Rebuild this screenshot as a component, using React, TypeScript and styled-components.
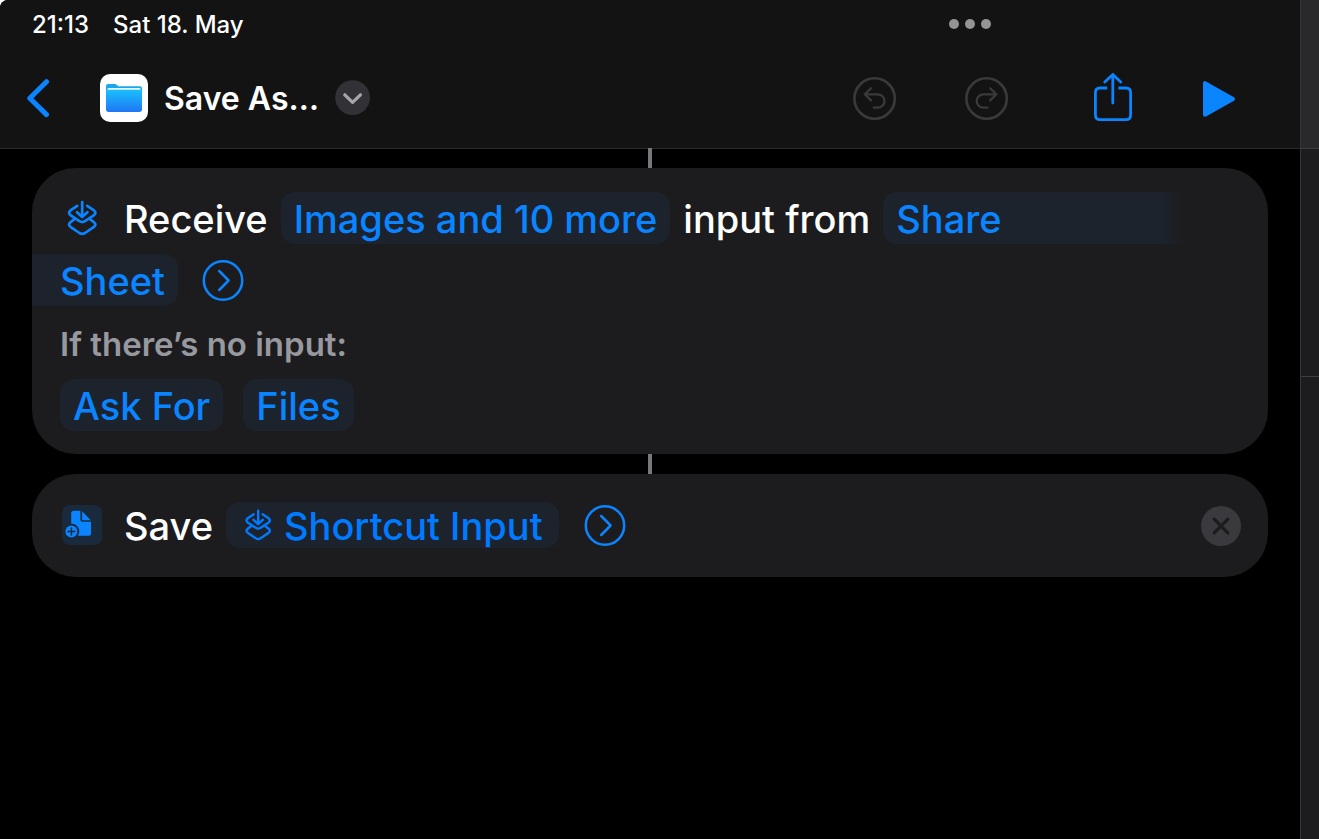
import React from "react";
import styled, { createGlobalStyle } from "styled-components";

const blue = "#0a84ff";

const GlobalStyle = createGlobalStyle`
  * { box-sizing: border-box; }
  body {
    margin: 0;
    background: #fff;
    font-family: Inter, "Liberation Sans", sans-serif;
    color: #fff;
  }
`;

const Screen = styled.div`
  display: flex;
  min-height: 100vh;
  background: #000;
  border-top-left-radius: 8px;
  overflow: hidden;
`;

const Editor = styled.main`
  flex: 1;
  min-width: 0;
`;

const Header = styled.header`
  background: #131313;
  border-bottom: 1px solid #2a2a2b;
`;

const StatusBar = styled.div`
  display: grid;
  grid-template-columns: 1fr auto;
  align-items: center;
  height: 48px;
  padding: 0 309px 0 32px;
  font-size: 24px;
  font-weight: 500;
`;

const Clock = styled.div`
  display: flex;
  gap: 24px;
`;

const DotsButton = styled.button`
  display: flex;
  gap: 6px;
  padding: 0;
  border: 0;
  background: none;
`;

const Dot = styled.span`
  width: 10px;
  height: 10px;
  border-radius: 50%;
  background: #959595;
`;

const Toolbar = styled.div`
  display: flex;
  align-items: center;
  justify-content: space-between;
  height: 100px;
  padding: 0 64px 0 26px;
`;

const TitleGroup = styled.div`
  display: flex;
  align-items: center;
`;

const IconButton = styled.button<{ $color?: string }>`
  display: flex;
  flex: none;
  padding: 0;
  border: 0;
  background: none;
  color: ${(p) => p.$color ?? blue};
`;

const AppTile = styled.span`
  display: flex;
  margin-left: 50px;
`;

const Title = styled.h1`
  margin: 0 16px;
  padding-top: 2px;
  font-size: 32px;
  line-height: 44px;
  font-weight: 600;
`;

const Actions = styled.div`
  display: flex;
  gap: 68px;
  align-items: center;
`;

const History = styled.div`
  display: flex;
  gap: 68px;
  margin-right: 16px;
`;

const Flow = styled.div`
  display: flex;
  flex-direction: column;
  margin-top: -1px;
  padding: 0 32px;
`;

const Connector = styled.div`
  align-self: center;
  width: 4px;
  height: 20px;
  background: #77777c;
`;

const Card = styled.section<{ $compact?: boolean }>`
  display: flex;
  flex-direction: column;
  gap: 10px;
  padding: ${(p) => (p.$compact ? "25px 27px 26px 28px" : "24px 28px 23px")};
  background: #1c1c1e;
  border-radius: 44px;
`;

const Row = styled.div<{ $gap?: number }>`
  display: flex;
  align-items: center;
  gap: ${(p) => p.$gap ?? 13}px;
  height: 52px;
  font-size: 38px;
  font-weight: 500;
  white-space: nowrap;
`;

const Glyph = styled.span`
  display: flex;
  justify-content: center;
  width: 44px;
  margin-right: 7px;
`;

const Label = styled.span`
  padding-top: 2px;
`;

const Chip = styled.button<{ $part?: "start" | "end"; $short?: boolean }>`
  display: flex;
  align-items: center;
  gap: 10px;
  height: ${(p) => (p.$short ? 46 : 52)}px;
  padding: 0 ${(p) => (p.$short ? 16 : 13)}px;
  border: 0;
  border-radius: 14px;
  background: #1c232d;
  color: ${(p) => (p.$short ? "#007aff" : blue)};
  font: inherit;
  ${(p) =>
    p.$part === "start" &&
    `flex: 1;
     margin-right: 56px;
     border-radius: 14px 0 0 14px;
     background: linear-gradient(to right, #1c232d calc(100% - 24px), #1c1c1e);`}
  ${(p) =>
    p.$part === "end" &&
    `margin-left: -28px;
     padding-left: 28px;
     border-radius: 0 14px 14px 0;`}
`;

const Note = styled.p`
  margin: 0;
  padding-top: 4px;
  color: #98989f;
  font-size: 33px;
  line-height: 49px;
  font-weight: 600;
`;

const Following = styled.div`
  display: flex;
  flex: 1;
  justify-content: space-between;
  padding-left: 12px;
`;

const Sidebar = styled.aside`
  display: flex;
  flex-direction: column;
  width: 19px;
  background: #1c1c1e;
  border-left: 1px solid #353537;
`;

const SidebarPane = styled.div<{ $height: number; $fill?: string }>`
  height: ${(p) => p.$height}px;
  background: ${(p) => p.$fill ?? "transparent"};
  border-bottom: 1px solid #3e3e40;
`;

const InputGlyph = ({ size, color }: { size: number; color: string }) => (
  <svg width={size} height={size} viewBox="0 0 36 36" fill="none" stroke={color} strokeWidth="2.7" strokeLinecap="round" strokeLinejoin="round">
    <path d="M13.2 5.8 6.4 10.4Q3.6 12.9 6.4 15.2L15.4 21.2Q18.2 22.9 21 21.2L30 15.2Q32.8 12.9 30 10.4L23.2 5.8" />
    <path d="M18.2 2V16.5M13 12.2 18.2 17 23.4 12.2" />
    <path d="M9.8 19.6 6.4 22.2Q3.6 24.6 6.4 26.8L15.4 33Q18.2 34.7 21 33L30 26.8Q32.8 24.6 30 22.2L26.6 19.6" />
  </svg>
);

const Detail = () => (
  <svg width="42" height="42" viewBox="0 0 42 42" fill="none" stroke={blue} strokeWidth="2.5" strokeLinecap="round" strokeLinejoin="round">
    <circle cx="21" cy="21.5" r="19.2" />
    <path d="M17.2 12 26.6 21.5 17.2 31" />
  </svg>
);

const Undo = ({ flip }: { flip?: boolean }) => (
  <svg width="44" height="44" viewBox="0 0 44 44" fill="none" stroke="currentColor" strokeWidth="2.6" strokeLinecap="round" strokeLinejoin="round">
    <circle cx="21.6" cy="22.5" r="20.2" />
    <g transform={flip ? "matrix(-1 0 0 1 43.2 0)" : undefined} strokeWidth="2.3">
      <path d="M18 12.2 11.8 18.3 18 24.4M12.2 18.3H24.8A6.7 6.7 0 0 1 24.8 31.7H20.8" />
    </g>
  </svg>
);

export default function App() {
  return (
    <>
      <GlobalStyle />
      <Screen>
        <Editor>
          <Header>
            <StatusBar>
              <Clock>
                <span>21:13</span>
                <span>Sat 18. May</span>
              </Clock>
              <DotsButton aria-label="Multitasking">
                <Dot />
                <Dot />
                <Dot />
              </DotsButton>
            </StatusBar>
            <Toolbar>
              <TitleGroup>
                <IconButton aria-label="Back">
                  <svg width="24" height="40" viewBox="0 0 24 40" fill="none" stroke="currentColor" strokeWidth="5" strokeLinecap="round" strokeLinejoin="round">
                    <path d="M20.5 3.7 3.8 20.2 20.5 36.6" />
                  </svg>
                </IconButton>
                <AppTile>
                  <svg width="48" height="48" viewBox="0 0 48 48">
                    <defs>
                      <linearGradient id="folder" x1="0" y1="0" x2="0" y2="1">
                        <stop offset="0" stopColor="#1bc0fb" />
                        <stop offset="1" stopColor="#1e75f5" />
                      </linearGradient>
                    </defs>
                    <rect width="48" height="48" rx="10" fill="#fff" />
                    <path d="M6 12.2Q6 10 8.2 10H14.5Q16 10 17 11L18.2 12.2H40Q42 12.2 42 14.5V22H6Z" fill="#1ba7f0" />
                    <rect x="7.5" y="14" width="33" height="3" rx="1" fill="#e4f7ff" />
                    <path d="M6 15.8H42V35.6Q42 38 39.6 38H8.4Q6 38 6 35.6Z" fill="url(#folder)" />
                  </svg>
                </AppTile>
                <Title>Save As…</Title>
                <IconButton aria-label="Shortcut options" $color="#a5a5ab">
                  <svg width="36" height="36" viewBox="0 0 36 36" fill="none" stroke="currentColor" strokeWidth="3.2" strokeLinecap="round" strokeLinejoin="round">
                    <circle cx="17.6" cy="17.6" r="17.4" fill="#323236" stroke="none" />
                    <path d="M9.8 14.8 17.6 22.4 25.4 14.8" />
                  </svg>
                </IconButton>
              </TitleGroup>
              <Actions>
                <History>
                  <IconButton aria-label="Undo" $color="#3a3a3a" disabled>
                    <Undo />
                  </IconButton>
                  <IconButton aria-label="Redo" $color="#3a3a3a" disabled>
                    <Undo flip />
                  </IconButton>
                </History>
                <IconButton aria-label="Share">
                  <svg width="40" height="50" viewBox="0 0 40 50" fill="none" stroke="currentColor" strokeWidth="2.8" strokeLinecap="round" strokeLinejoin="round">
                    <path d="M14.2 15H7Q2.4 15 2.4 19.6V42Q2.4 46.6 7 46.6H33Q37.6 46.6 37.6 42V19.6Q37.6 15 33 15H25.4" strokeLinecap="butt" />
                    <path d="M19.8 30V1.8M11.8 9 19.8 1.4 27.8 9" />
                  </svg>
                </IconButton>
                <IconButton aria-label="Run">
                  <svg width="35" height="38" viewBox="0 0 35 38" fill="currentColor" stroke="currentColor" strokeWidth="4" strokeLinejoin="round">
                    <path d="M4 4.2V35.8L32 20Z" />
                  </svg>
                </IconButton>
              </Actions>
            </Toolbar>
          </Header>
          <Flow>
            <Connector />
            <Card>
              <Row>
                <Glyph>
                  <InputGlyph size={36} color={blue} />
                </Glyph>
                <Label>Receive</Label>
                <Chip>
                  <Label>Images and 10 more</Label>
                </Chip>
                <Label>input from</Label>
                <Chip $part="start">
                  <Label>Share</Label>
                </Chip>
              </Row>
              <Row $gap={24}>
                <Chip $part="end">
                  <Label>Sheet</Label>
                </Chip>
                <IconButton aria-label="Show input options">
                  <Detail />
                </IconButton>
              </Row>
              <Note>If there’s no input:</Note>
              <Row $gap={20}>
                <Chip>
                  <Label>Ask For</Label>
                </Chip>
                <Chip>
                  <Label>Files</Label>
                </Chip>
              </Row>
            </Card>
            <Connector />
            <Card $compact>
              <Row>
                <Glyph>
                  <svg width="40" height="40" viewBox="0 0 40 40">
                    <rect width="40" height="40" rx="8" fill="#1a2a3d" />
                    <path d="M12 5.8H18.4V14.8Q18.4 16.8 20.4 16.8H29V28.2Q29 30.8 26.4 30.8H15.8A7.6 7.6 0 0 0 9.2 18.8V8.6Q9.2 5.8 12 5.8Z" fill={blue} />
                    <path d="M20.1 6.2 28.8 15.2H20.8Q20.1 15.2 20.1 14.5Z" fill={blue} />
                    <circle cx="9.4" cy="26.4" r="7.4" fill="#1a2a3d" />
                    <circle cx="9.4" cy="26.4" r="6" fill={blue} />
                    <path d="M9.4 22.9V29.9M5.9 26.4H12.9" stroke="#1a2a3d" strokeWidth="1.5" strokeLinecap="round" />
                  </svg>
                </Glyph>
                <Label>Save</Label>
                <Chip $short>
                  <InputGlyph size={32} color="#007aff" />
                  <Label>Shortcut Input</Label>
                </Chip>
                <Following>
                  <IconButton aria-label="Show save options">
                    <Detail />
                  </IconButton>
                  <IconButton aria-label="Remove action">
                    <svg width="40" height="42" viewBox="0 0 40 42" stroke="#1c1c1e" strokeWidth="3.2" strokeLinecap="round">
                      <circle cx="20" cy="22" r="20" fill="#3a3a3e" stroke="none" />
                      <path d="M13.2 15.2 26.8 28.8M26.8 15.2 13.2 28.8" />
                    </svg>
                  </IconButton>
                </Following>
              </Row>
            </Card>
          </Flow>
        </Editor>
        <Sidebar>
          <SidebarPane $height={149} $fill="#29292b" />
          <SidebarPane $height={228} />
        </Sidebar>
      </Screen>
    </>
  );
}
